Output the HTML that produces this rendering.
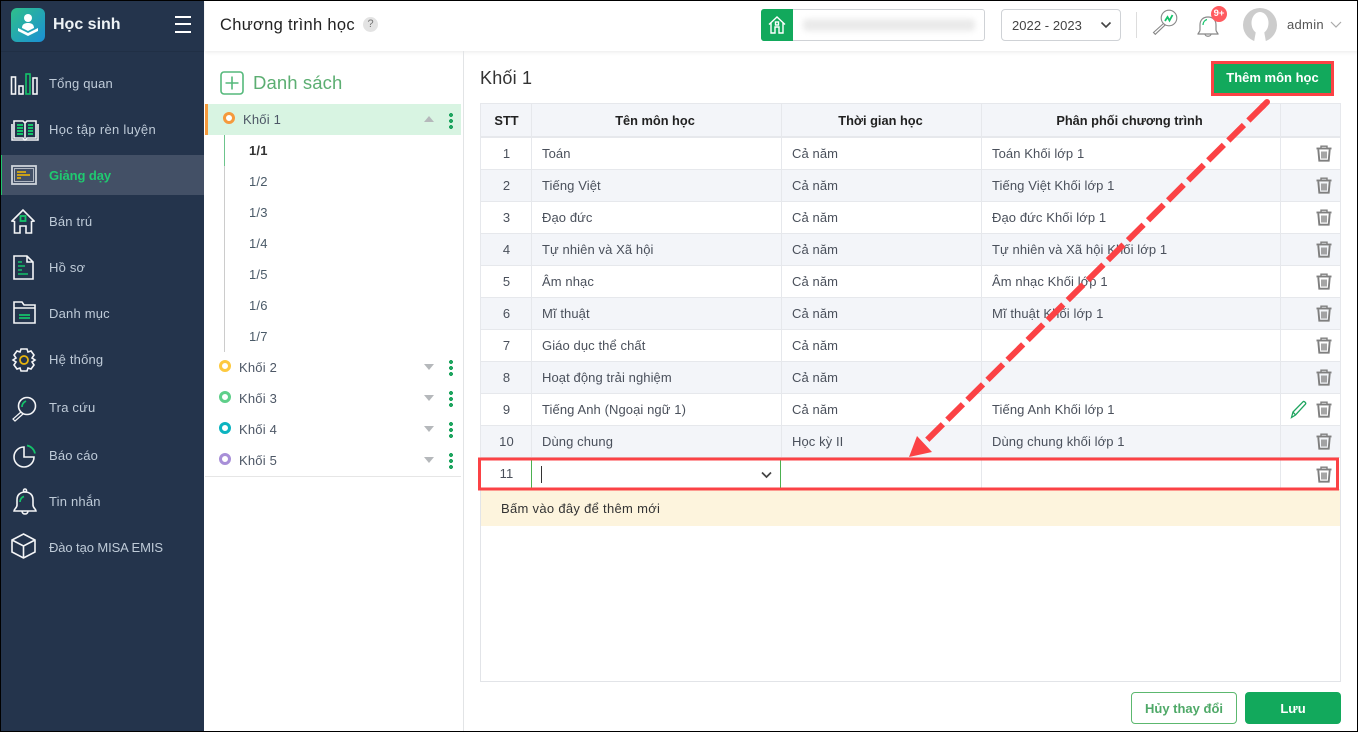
<!DOCTYPE html>
<html lang="vi"><head><meta charset="utf-8"><title>Chương trình học</title>
<style>
*{box-sizing:border-box}
html,body{margin:0;padding:0}
body{width:1358px;height:732px;position:relative;overflow:hidden;background:#fff;font-family:"Liberation Sans","DejaVu Sans",sans-serif;font-size:13px;color:#444b57}
.a{position:absolute;white-space:nowrap}
.side{position:absolute;left:1px;top:1px;width:203px;height:730px;background:#24344c}
.mi{position:absolute;left:49px;color:#bfcbd8;font-size:13px;letter-spacing:.2px;line-height:18px}
.active{position:absolute;left:1px;top:155px;width:203px;height:40px;background:#435066;border-left:1px solid #1fc26b}
.ic{position:absolute;fill:none;stroke:#f4f5f7;stroke-width:1.600}
.g{stroke:#14c26a}
.tr{position:absolute;left:480px;width:861px;height:32px;border-bottom:1px solid #e6e8ec}
.alt{background:#f3f5f9}
.c{position:absolute;top:0;height:32px;line-height:31px;font-size:13px;letter-spacing:.09px;color:#4a505b;border-left:1px solid #e6e8ec;padding-left:10px;white-space:nowrap}
.c1{left:0;width:52px;border-left:1px solid #e6e8ec;padding:0;text-align:center}
.c2{left:51px;width:250px}.c3{left:301px;width:200px}.c4{left:501px;width:299px}.c5{left:800px;width:61px;border-right:1px solid #e6e8ec}
.h{position:absolute;top:103px;height:35px;background:#f3f5f9;border:1px solid #e6e8ec;border-bottom:2px solid #e6e8ec;border-right:0;text-align:center;font-weight:bold;font-size:12.800px;line-height:34px;color:#222}
.sub{position:absolute;left:249px;font-size:13px;color:#4a5a68;letter-spacing:.2px;line-height:16px}
.kh{position:absolute;left:239px;font-size:13px;color:#4d5766;letter-spacing:.2px;line-height:16px}
.dot{position:absolute;width:12px;height:12px;border-radius:50%;border:3px solid #000;background:#fff}
.tri{position:absolute;left:424px;width:0;height:0;border-left:5.500px solid transparent;border-right:5.500px solid transparent;border-top:6px solid #b5b8bb}
.dots{position:absolute;left:449px;width:4px;height:16px;background:radial-gradient(circle at 2px 2px,#1fa560 2px,transparent 2.100px) 0 0/4px 6px repeat-y}
</style></head><body>

<!-- header -->
<div class="a" style="left:205px;top:0;width:1153px;height:51px;background:#fff;box-shadow:0 1px 4px rgba(0,0,0,.09)"></div>
<div class="a" style="left:220px;top:14px;font-size:16.500px;line-height:22px;color:#222;letter-spacing:.3px">Chương trình học</div>
<div class="a" style="left:363px;top:17px;width:15px;height:15px;border-radius:50%;background:#e3e3e3;color:#777;font-size:11px;line-height:15px;text-align:center">?</div>

<div class="a" style="left:761px;top:9px;width:224px;height:32px;border:1px solid #cfd2d6;border-radius:3px;background:#fff"></div>
<div class="a" style="left:761px;top:9px;width:32px;height:32px;background:#12a95c;border-radius:3px 0 0 3px"></div>
<svg class="a" style="left:767px;top:15px" width="20" height="20" viewBox="0 0 20 20" fill="none" stroke="#fff" stroke-width="1.400"><path d="M2 9.500 10 2l8 7.500M4 8v10h4v-6h4v6h4V8"/><rect x="8.500" y="7" width="3" height="3"/></svg>
<div class="a" style="left:803px;top:19px;width:172px;height:12px;background:#eaeaea;filter:blur(3px);border-radius:4px"></div>

<div class="a" style="left:1001px;top:9px;width:120px;height:32px;border:1px solid #cfd2d6;border-radius:4px"></div>
<div class="a" style="left:1012px;top:17px;font-size:13px;line-height:17px;color:#444;letter-spacing:.05px">2022 - 2023</div>
<svg class="a" style="left:1100px;top:21px" width="12" height="8" viewBox="0 0 12 8" fill="none" stroke="#444" stroke-width="1.600"><path d="M1.500 1.500 6 6l4.500-4.500"/></svg>
<div class="a" style="left:1136px;top:12px;width:1px;height:26px;background:#ddd"></div>
<svg class="a" style="left:1151px;top:9px" width="28" height="28" viewBox="0 0 28 28" fill="none"><circle cx="18" cy="9" r="7.800" stroke="#888" stroke-width="1.100"/><path d="M12.500 14.500 2.500 23.500l1.800 1.800 10-9.500" stroke="#888" stroke-width="1.100"/><path d="M14 12l2.500-4 2 3.500 3-5.500" stroke="#14c26a" stroke-width="1.800"/></svg>
<svg class="a" style="left:1195px;top:10px" width="26" height="28" viewBox="0 0 26 28" fill="none" stroke="#888" stroke-width="1.200"><path d="M3 24c0-1 2-2 2-4v-5c0-5 3-8 8-8s8 3 8 8v5c0 2 2 3 2 4zM10 24c0 3 6 3 6 0"/><path d="M8 15c0-3 2-5 4-5.500" stroke="#14c26a"/></svg>
<div class="a" style="left:1211px;top:6px;width:16px;height:16px;border-radius:50%;background:#ff5a5f;color:#fff;font-size:9.500px;font-weight:bold;line-height:16px;text-align:center">9+</div>
<svg class="a" style="left:1243px;top:8px" width="34" height="34" viewBox="0 0 34 34"><circle cx="17" cy="17" r="17" fill="#cccccc"/><ellipse cx="17" cy="15" rx="8.500" ry="11" fill="#fff"/><path d="M11 34 13 23h8l2 11z" fill="#fff"/></svg>
<div class="a" style="left:1287px;top:16px;font-size:13px;line-height:17px;color:#555;letter-spacing:.3px">admin</div>
<svg class="a" style="left:1330px;top:21px" width="12" height="8" viewBox="0 0 12 8" fill="none" stroke="#aaa" stroke-width="1.200"><path d="M1 1l5 5 5-5"/></svg>

<!-- sidebar -->
<div class="side"></div>
<div class="a" style="left:1px;top:51px;width:203px;height:1px;background:#202f45"></div>
<div class="active"></div>
<svg class="a" style="left:11px;top:8px" width="34" height="34" viewBox="0 0 34 34"><defs><linearGradient id="lg" x1="0" y1="0" x2="1" y2="1"><stop offset="0" stop-color="#2fc08a"/><stop offset="1" stop-color="#1a8fd6"/></linearGradient></defs><rect width="34" height="34" rx="6" fill="url(#lg)"/><circle cx="17" cy="10" r="4" fill="#fff"/><path d="M11 20c0-4 3-5 6-5s6 1 6 5l-6 3zM7 20l10 5 10-5v3l-10 5-10-5z" fill="#fff"/></svg>
<div class="a" style="left:53px;top:13px;font-size:16px;font-weight:bold;color:#eef3f6;line-height:23px">Học sinh</div>
<div class="a" style="left:175px;top:16px;width:16px;height:17px;border-top:2px solid #fff;border-bottom:2px solid #fff"></div>
<div class="a" style="left:175px;top:23px;width:16px;height:2px;background:#fff"></div>

<div class="mi" style="top:75px">Tổng quan</div>
<div class="mi" style="top:121px;letter-spacing:.3px">Học tập rèn luyện</div>
<div class="mi" style="top:167px;color:#1fcb70;font-weight:bold;letter-spacing:-.1px">Giảng dạy</div>
<div class="mi" style="top:213px">Bán trú</div>
<div class="mi" style="top:259px">Hồ sơ</div>
<div class="mi" style="top:305px">Danh mục</div>
<div class="mi" style="top:351px">Hệ thống</div>
<div class="mi" style="top:399px">Tra cứu</div>
<div class="mi" style="top:447px">Báo cáo</div>
<div class="mi" style="top:493px">Tin nhắn</div>
<div class="mi" style="top:539px;letter-spacing:-.1px">Đào tạo MISA EMIS</div>

<svg class="ic" style="left:10px;top:72px" width="28" height="24" viewBox="0 0 28 24"><rect x="1.500" y="5" width="4" height="17"/><rect x="9" y="14" width="4" height="8"/><rect class="g" x="16" y="2" width="4" height="20"/><rect x="23" y="6" width="4" height="16"/></svg>
<svg class="ic" style="left:11px;top:118px" width="28" height="24" viewBox="0 0 28 24"><path d="M3 3h9l2 2 2-2h9v17H16l-2 2-2-2H3zM14 5v15"/><path d="M1 6v16h26V6"/><path class="g" d="M6 7h6M6 10h6M6 13h6M6 16h6M17 7h5M17 10h5M17 13h5M17 16h5" stroke-width="2"/></svg>
<svg class="ic" style="left:11px;top:165px" width="26" height="21" viewBox="0 0 26 21"><rect x="1" y="1" width="24" height="18" stroke="#ced3da" stroke-width="1.800"/><rect x="3.500" y="3.500" width="19" height="13" stroke="#ced3da" stroke-width=".8"/><path d="M6 7h9M6 10h13M6 13h4" stroke="#c9a01b" stroke-width="2"/></svg>
<svg class="ic" style="left:11px;top:208px" width="24" height="26" viewBox="0 0 24 26"><path d="M1 13 12 2l11 11-2.500.5V25H15v-7H9v7H3.500V13.500z"/><rect class="g" x="9.500" y="8" width="5" height="5" stroke-width="1.800"/></svg>
<svg class="ic" style="left:13px;top:255px" width="21" height="25" viewBox="0 0 21 25"><path d="M1 1h13l6 6v17H1zM14 1v6h6"/><path class="g" d="M5 7h4M5 11h7M5 15h4M5 19h10" stroke-width="1.500"/></svg>
<svg class="ic" style="left:13px;top:301px" width="23" height="23" viewBox="0 0 23 23"><path d="M1 1h8l2 3h11v18H1zM1 7h21"/><path class="g" d="M6 14h11M6 17h11" stroke-width="1.700"/></svg>
<svg class="ic" style="left:11px;top:347px" width="26" height="26" viewBox="0 0 26 26"><path d="M10 2h6l1 3 3-1 3 4-2 3 3 2-3 2 2 3-3 4-3-1-1 3h-6l-1-3-3 1-3-4 2-3-3-2 3-2-2-3 3-4 3 1z"/><circle cx="13" cy="13" r="4" stroke="#e7b40d" stroke-width="1.800"/></svg>
<svg class="ic" style="left:11px;top:396px" width="26" height="26" viewBox="0 0 26 26"><circle cx="16" cy="10" r="8.500"/><path d="M10 16 2 23l2 2 8-7" stroke-width="1.200"/><path class="g" d="M11 11c0-3 2-5 4-6" stroke-width="1.800"/></svg>
<svg class="ic" style="left:13px;top:444px" width="24" height="24" viewBox="0 0 24 24"><path d="M11 3A10 10 0 1 0 21 13H11z"/><path class="g" d="M14 1.500A10 10 0 0 1 22 9.500" stroke-width="1.800"/></svg>
<svg class="ic" style="left:13px;top:488px" width="24" height="27" viewBox="0 0 24 27"><path d="M1 23c0-2 3-3 3-6v-5c0-5 3-8 8-8s8 3 8 8v5c0 3 3 4 3 6zM9 23c0 4 6 4 6 0"/><circle cx="12" cy="2.500" r="1.500"/><path class="g" d="M7 14c0-3 2-5 4-5.500" stroke-width="1.800"/></svg>
<svg class="ic" style="left:11px;top:533px" width="25" height="26" viewBox="0 0 25 26"><path d="M12.500 1 24 7v12l-11.500 6L1 19V7zM1 7l11.500 6L24 7M12.500 13v12"/></svg>

<!-- left panel -->
<div class="a" style="left:463px;top:51px;width:1px;height:681px;background:#e2e4e6"></div>
<svg class="a" style="left:220px;top:71px" width="24" height="24" viewBox="0 0 24 24" fill="none" stroke="#55b97b" stroke-width="1.600"><rect x="1" y="1" width="22" height="22" rx="3"/><path d="M12 5.500v13M5.500 12h13"/></svg>
<div class="a" style="left:253px;top:70px;font-size:18.500px;line-height:25px;color:#5cae72;letter-spacing:.1px">Danh sách</div>
<div class="a" style="left:205px;top:104px;width:256px;height:31px;background:#d8f4e2"></div>
<div class="a" style="left:205px;top:104px;width:3px;height:31px;background:#f59a3d"></div>
<div class="dot" style="left:223px;top:112px;border-color:#f59a3d"></div>
<div class="kh" style="left:243px;top:112px">Khối 1</div>
<div class="tri" style="left:424px;top:116px;border-top:0;border-bottom:6px solid #b5b8bb"></div>
<div class="dots" style="top:113px"></div>
<div class="a" style="left:224px;top:135px;width:1px;height:31px;background:#6cc48c"></div>
<div class="a" style="left:224px;top:166px;width:1px;height:186px;background:#ccc"></div>
<div class="sub" style="top:143px;font-weight:bold;color:#333">1/1</div>
<div class="sub" style="top:174px">1/2</div>
<div class="sub" style="top:205px">1/3</div>
<div class="sub" style="top:236px">1/4</div>
<div class="sub" style="top:267px">1/5</div>
<div class="sub" style="top:298px">1/6</div>
<div class="sub" style="top:329px">1/7</div>
<div class="dot" style="left:219px;top:360px;border-color:#fdc93f"></div><div class="kh" style="top:360px">Khối 2</div><div class="tri" style="top:364px"></div><div class="dots" style="top:360px"></div>
<div class="dot" style="left:219px;top:391px;border-color:#5fcf8a"></div><div class="kh" style="top:391px">Khối 3</div><div class="tri" style="top:395px"></div><div class="dots" style="top:391px"></div>
<div class="dot" style="left:219px;top:422px;border-color:#0cb4c0"></div><div class="kh" style="top:422px">Khối 4</div><div class="tri" style="top:426px"></div><div class="dots" style="top:422px"></div>
<div class="dot" style="left:219px;top:453px;border-color:#a88fd8"></div><div class="kh" style="top:453px">Khối 5</div><div class="tri" style="top:457px"></div><div class="dots" style="top:453px"></div>
<div class="a" style="left:205px;top:476px;width:256px;height:1px;background:#e6e6e6"></div>

<!-- main -->
<div class="a" style="left:480px;top:66px;font-size:18px;line-height:24px;color:#333;letter-spacing:.2px">Khối 1</div>
<div class="a" style="left:1213px;top:64px;width:119px;height:29px;background:#12a95c;color:#fff;font-weight:bold;font-size:13px;line-height:28px;text-align:center">Thêm môn học</div>

<div class="a" style="left:480px;top:103px;width:861px;height:579px;border:1px solid #e2e4e8;border-top:0"></div>
<div class="h" style="left:480px;width:52px">STT</div>
<div class="h" style="left:531px;width:247px">Tên môn học</div>
<div class="h" style="left:781px;width:198px">Thời gian học</div>
<div class="h" style="left:981px;width:296px">Phân phối chương trình</div>
<div class="a" style="left:778px;top:103px;width:3px;height:35px;background:#f3f5f9;border-top:1px solid #e6e8ec;border-bottom:2px solid #e6e8ec"></div>
<div class="a" style="left:979px;top:103px;width:2px;height:35px;background:#f3f5f9;border-top:1px solid #e6e8ec;border-bottom:2px solid #e6e8ec"></div>
<div class="a" style="left:1277px;top:103px;width:3px;height:35px;background:#f3f5f9;border-top:1px solid #e6e8ec;border-bottom:2px solid #e6e8ec"></div>
<div class="h" style="left:1280px;width:61px;border-right:1px solid #e6e8ec"></div>

<div class="tr" style="top:138px"><div class="c c1">1</div><div class="c c2">Toán</div><div class="c c3">Cả năm</div><div class="c c4">Toán Khối lớp 1</div><div class="c c5"></div></div>
<div class="tr alt" style="top:170px"><div class="c c1">2</div><div class="c c2">Tiếng Việt</div><div class="c c3">Cả năm</div><div class="c c4">Tiếng Việt Khối lớp 1</div><div class="c c5"></div></div>
<div class="tr" style="top:202px"><div class="c c1">3</div><div class="c c2">Đạo đức</div><div class="c c3">Cả năm</div><div class="c c4">Đạo đức Khối lớp 1</div><div class="c c5"></div></div>
<div class="tr alt" style="top:234px"><div class="c c1">4</div><div class="c c2">Tự nhiên và Xã hội</div><div class="c c3">Cả năm</div><div class="c c4">Tự nhiên và Xã hội Khối lớp 1</div><div class="c c5"></div></div>
<div class="tr" style="top:266px"><div class="c c1">5</div><div class="c c2">Âm nhạc</div><div class="c c3">Cả năm</div><div class="c c4">Âm nhạc Khối lớp 1</div><div class="c c5"></div></div>
<div class="tr alt" style="top:298px"><div class="c c1">6</div><div class="c c2">Mĩ thuật</div><div class="c c3">Cả năm</div><div class="c c4">Mĩ thuật Khối lớp 1</div><div class="c c5"></div></div>
<div class="tr" style="top:330px"><div class="c c1">7</div><div class="c c2">Giáo dục thể chất</div><div class="c c3">Cả năm</div><div class="c c4"></div><div class="c c5"></div></div>
<div class="tr alt" style="top:362px"><div class="c c1">8</div><div class="c c2">Hoạt động trải nghiệm</div><div class="c c3">Cả năm</div><div class="c c4"></div><div class="c c5"></div></div>
<div class="tr" style="top:394px"><div class="c c1">9</div><div class="c c2">Tiếng Anh (Ngoại ngữ 1)</div><div class="c c3">Cả năm</div><div class="c c4">Tiếng Anh Khối lớp 1</div><div class="c c5"></div></div>
<div class="tr alt" style="top:426px"><div class="c c1">10</div><div class="c c2">Dùng chung</div><div class="c c3">Học kỳ II</div><div class="c c4">Dùng chung khối lớp 1</div><div class="c c5"></div></div>
<div class="tr" style="top:458px"><div class="c c1">11</div><div class="c c2" style="border-left:1px solid #4cb050;border-right:1px solid #4cb050;width:250px"></div><div class="c c3" style="border-left:0"></div><div class="c c4"></div><div class="c c5"></div></div>
<div class="a" style="left:541px;top:466px;width:1px;height:17px;background:#333"></div>
<svg class="a" style="left:761px;top:471px" width="11" height="8" viewBox="0 0 11 8" fill="none" stroke="#444" stroke-width="1.700"><path d="M1 1.500 5.500 6 10 1.500"/></svg>
<div class="a" style="left:481px;top:490px;width:859px;height:36px;background:#fdf4dd;color:#333;font-size:13px;line-height:37px;padding-left:20px;letter-spacing:.3px">Bấm vào đây để thêm mới</div>

<svg width="0" height="0" style="position:absolute"><defs><g id="t" fill="none" stroke="#7f7f7f"><path d="M.5 3.500h15" stroke-width="1.900"/><path d="M5 3V1.200h6V3" stroke-width="1.400"/><path d="M2.300 4.500 3.300 15.700h9.400l1-11.200" stroke-width="1.900"/><path d="M6 6.500v7M8 6.500v7M10 6.500v7" stroke-width="1.400"/></g></defs></svg>
<svg class="a" style="left:1316px;top:145px" width="16" height="17"><use href="#t"/></svg>
<svg class="a" style="left:1316px;top:177px" width="16" height="17"><use href="#t"/></svg>
<svg class="a" style="left:1316px;top:209px" width="16" height="17"><use href="#t"/></svg>
<svg class="a" style="left:1316px;top:241px" width="16" height="17"><use href="#t"/></svg>
<svg class="a" style="left:1316px;top:273px" width="16" height="17"><use href="#t"/></svg>
<svg class="a" style="left:1316px;top:305px" width="16" height="17"><use href="#t"/></svg>
<svg class="a" style="left:1316px;top:337px" width="16" height="17"><use href="#t"/></svg>
<svg class="a" style="left:1316px;top:369px" width="16" height="17"><use href="#t"/></svg>
<svg class="a" style="left:1316px;top:401px" width="16" height="17"><use href="#t"/></svg>
<svg class="a" style="left:1316px;top:433px" width="16" height="17"><use href="#t"/></svg>
<svg class="a" style="left:1316px;top:466px" width="16" height="17"><use href="#t"/></svg>
<svg class="a" style="left:1290px;top:400px" width="18" height="19" viewBox="0 0 18 19" fill="none" stroke="#1fa560" stroke-width="1.300"><path d="M1.500 17.500 3 12 13 1.800c1-1 3.500 1 2.500 2.300L5.500 15z"/><path d="M3 12l2.500 3"/></svg>

<div class="a" style="left:1131px;top:692px;width:106px;height:32px;border:1px solid #5cb86f;border-radius:4px;color:#4fa968;font-weight:bold;font-size:13px;line-height:31px;text-align:center">Hủy thay đổi</div>
<div class="a" style="left:1245px;top:692px;width:96px;height:32px;background:#12a95c;border-radius:4px;color:#fff;font-weight:bold;font-size:13px;line-height:33px;text-align:center">Lưu</div>

<!-- annotations -->
<svg class="a" style="left:0;top:0" width="1358" height="732" fill="none">
<rect x="1212.500" y="62.500" width="120" height="32" stroke="#fb4245" stroke-width="3"/>
<rect x="479.500" y="459" width="858" height="30" stroke="#fb4245" stroke-width="3"/>
<path d="M1264 105 925 442" stroke="#fb4245" stroke-width="6" stroke-dasharray="22 6.300"/>
<path d="M1267 102 1262 107" stroke="#fb4245" stroke-width="6" stroke-linecap="round"/>
<path d="M909 457 917 436 932 452z" fill="#fb4245"/>
</svg>

<!-- screenshot frame -->
<div class="a" style="left:0;top:0;width:1358px;height:732px;border:1px solid #000;pointer-events:none"></div>
</body></html>
